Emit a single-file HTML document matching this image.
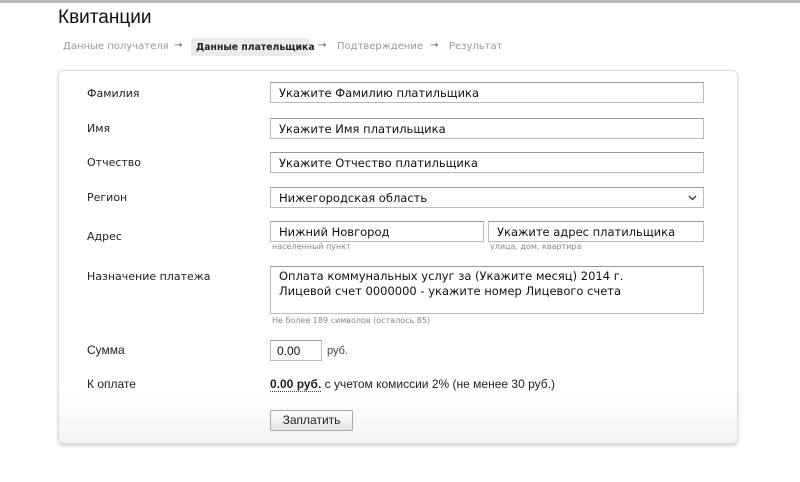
<!DOCTYPE html>
<html><head><meta charset="utf-8"><style>
*{box-sizing:border-box;margin:0;padding:0}
body{width:800px;height:482px;background:#fff;position:relative;overflow:hidden;font-family:"DejaVu Sans",sans-serif;color:#222}
.a{position:absolute;white-space:nowrap}
.lb{font-size:11px;left:87px}
.in{position:absolute;border:1px solid #bbb;border-top-color:#999;background:#fff;font-size:11.5px;padding:3px 8px;height:21px;color:#111}
.h{position:absolute;font-size:8px;color:#888}
.ls{font-family:"Liberation Sans",sans-serif}
.bc{position:absolute;top:41px;font-size:10px;color:#999;white-space:nowrap}
.ar{position:absolute;top:40px;font-size:10px;color:#666}
</style></head><body>
<div class="a" style="left:0;top:0;width:800px;height:3px;background:#bbb"></div>
<div class="a ls" style="left:58px;top:7px;font-size:19px;color:#111">Квитанции</div>
<div class="bc" style="left:63px">Данные получателя</div>
<div class="ar" style="left:174px">→</div>
<div class="a" style="left:191px;top:38px;width:118px;height:18px;background:#ebebeb;border-radius:2px;font-size:9.3px;font-weight:bold;color:#222;padding:4px 0 0 5px">Данные плательщика</div>
<div class="ar" style="left:318px">→</div>
<div class="bc" style="left:337px">Подтверждение</div>
<div class="ar" style="left:430px">→</div>
<div class="bc" style="left:449px">Результат</div>
<div class="a" style="left:58px;top:70px;width:680px;height:374px;border:1px solid #ddd;border-radius:5px;box-shadow:0 2px 3px rgba(0,0,0,.18);background:linear-gradient(#fff 85%,#f4f4f4)"></div>
<div class="a lb" style="top:87px">Фамилия</div>
<div class="a lb" style="top:122px">Имя</div>
<div class="a lb" style="top:156px">Отчество</div>
<div class="a lb" style="top:191px">Регион</div>
<div class="a lb" style="top:230px">Адрес</div>
<div class="a lb" style="top:270px">Назначение платежа</div>
<div class="a lb ls" style="top:343px;font-size:12px">Сумма</div>
<div class="a lb ls" style="top:377px;font-size:12px">К оплате</div>
<div class="in" style="left:270px;top:82px;width:434px">Укажите Фамилию платильщика</div>
<div class="in" style="left:270px;top:118px;width:434px">Укажите Имя платильщика</div>
<div class="in" style="left:270px;top:152px;width:434px">Укажите Отчество платильщика</div>
<div class="in" style="left:270px;top:187px;width:434px">Нижегородская область<svg style="position:absolute;right:6px;top:7px" width="9" height="6"><path d="M1 1l3.5 3.5L8 1" stroke="#444" stroke-width="1.5" fill="none"/></svg></div>
<div class="in" style="left:270px;top:221px;width:214px">Нижний Новгород</div>
<div class="in" style="left:488px;top:221px;width:216px">Укажите адрес платильщика</div>
<div class="h" style="left:272px;top:242px">населенный пункт</div>
<div class="h" style="left:490px;top:242px">улица, дом, квартира</div>
<div class="in" style="left:270px;top:266px;width:434px;height:48px;line-height:15px;padding:2px 8px">Оплата коммунальных услуг за (Укажите месяц) 2014 г.<br>Лицевой счет 0000000 - укажите номер Лицевого счета</div>
<div class="h" style="left:272px;top:316px">Не более 189 символов (осталось 85)</div>
<div class="in ls" style="left:270px;top:340px;width:52px;font-size:12px;padding:3px 6px">0.00</div>
<div class="a ls" style="left:327px;top:345px;font-size:11px;color:#444">руб.</div>
<div class="a ls" style="left:270px;top:377px;font-size:12px"><b style="border-bottom:1px dotted #444">0.00 руб.</b> с учетом комиссии 2% (не менее 30 руб.)</div>
<div class="a ls" style="left:270px;top:410px;width:83px;height:21px;border:1px solid #aaa;border-radius:2px;background:linear-gradient(#fff,#e4e4e4);font-size:12px;text-align:center;line-height:19px">Заплатить</div>
</body></html>
